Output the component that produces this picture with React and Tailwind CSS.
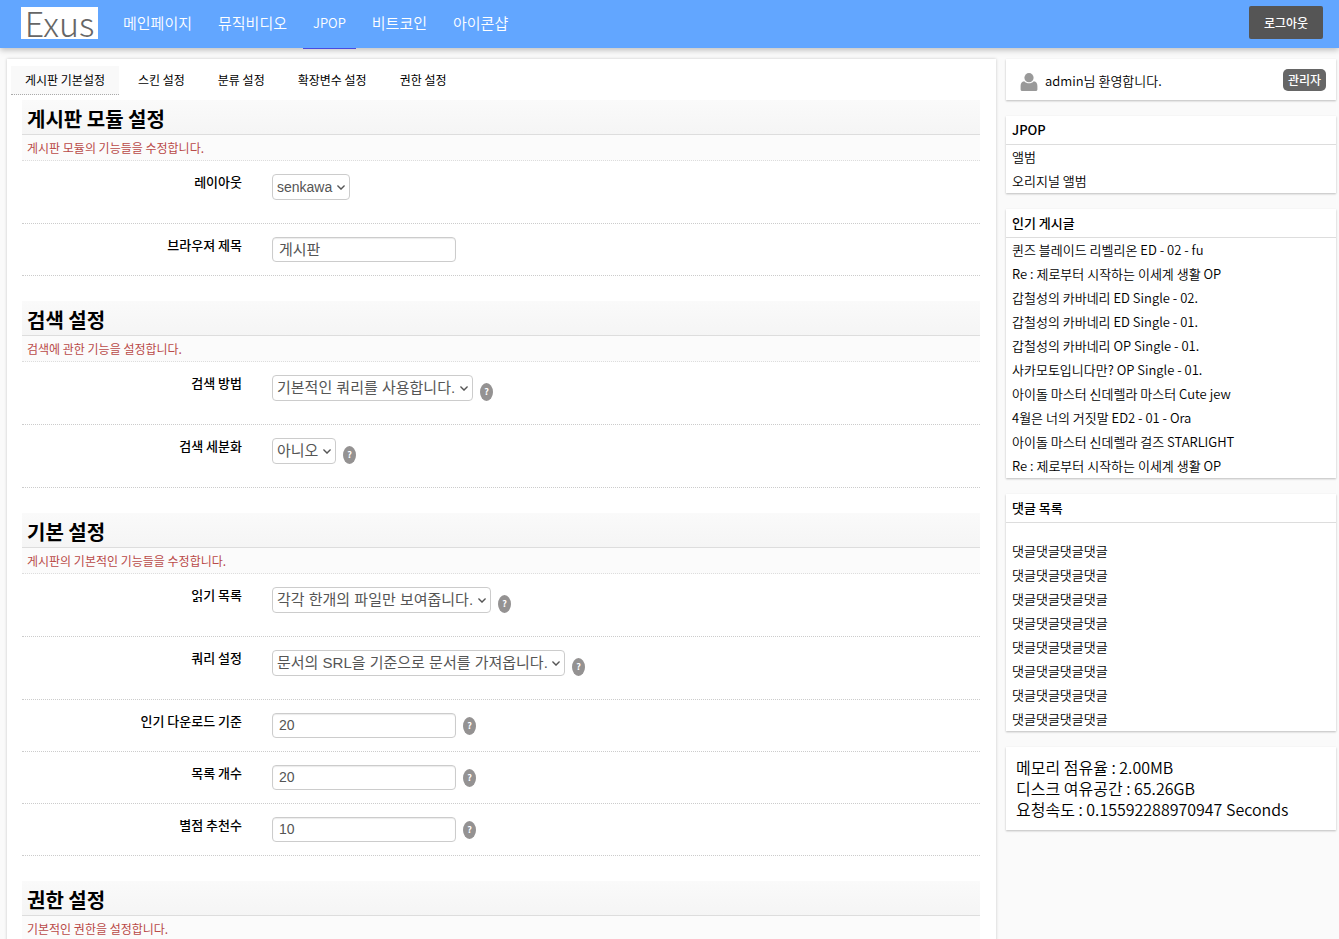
import React, { useState } from "react";
import clsx from "clsx";

const menus = ["메인페이지", "뮤직비디오", "JPOP", "비트코인", "아이콘샵"];

const tabs = [
  "게시판 기본설정",
  "스킨 설정",
  "분류 설정",
  "확장변수 설정",
  "권한 설정",
];

const sections = [
  {
    title: "게시판 모듈 설정",
    desc: "게시판 모듈의 기능들을 수정합니다.",
    fields: [
      { id: "layout", label: "레이아웃", type: "select", value: "senkawa", latin: true },
      { id: "browser_title", label: "브라우져 제목", type: "text", value: "게시판" },
    ],
  },
  {
    title: "검색 설정",
    desc: "검색에 관한 기능을 설정합니다.",
    fields: [
      { id: "search_type", label: "검색 방법", type: "select", value: "기본적인 쿼리를 사용합니다.", help: true },
      { id: "search_detail", label: "검색 세분화", type: "select", value: "아니오", help: true },
    ],
  },
  {
    title: "기본 설정",
    desc: "게시판의 기본적인 기능들을 수정합니다.",
    fields: [
      { id: "read_list", label: "읽기 목록", type: "select", value: "각각 한개의 파일만 보여줍니다.", help: true },
      { id: "query", label: "쿼리 설정", type: "select", value: "문서의 SRL을 기준으로 문서를 가져옵니다.", help: true },
      { id: "download_count", label: "인기 다운로드 기준", type: "text", value: "20", latin: true, help: true },
      { id: "list_count", label: "목록 개수", type: "text", value: "20", latin: true, help: true },
      { id: "star_count", label: "별점 추천수", type: "text", value: "10", latin: true, help: true },
    ],
  },
  {
    title: "권한 설정",
    desc: "기본적인 권한을 설정합니다.",
    fields: [],
  },
];

const albums = ["앨범", "오리지널 앨범"];

const popular = [
  "퀸즈 블레이드 리벨리온 ED - 02 - fu",
  "Re : 제로부터 시작하는 이세계 생활 OP",
  "갑철성의 카바네리 ED Single - 02.",
  "갑철성의 카바네리 ED Single - 01.",
  "갑철성의 카바네리 OP Single - 01.",
  "사카모토입니다만? OP Single - 01.",
  "아이돌 마스터 신데렐라 마스터 Cute jew",
  "4월은 너의 거짓말 ED2 - 01 - Ora",
  "아이돌 마스터 신데렐라 걸즈 STARLIGHT",
  "Re : 제로부터 시작하는 이세계 생활 OP",
];

const comments = Array(8).fill("댓글댓글댓글댓글");

const stats = [
  { label: "메모리 점유율", value: "2.00MB" },
  { label: "디스크 여유공간", value: "65.26GB" },
  { label: "요청속도", value: "0.15592288970947 Seconds" },
];

const Help = () => (
  <button
    type="button"
    aria-label="도움말"
    className="w-[13px] h-[18px] shrink-0 rounded-[50%] bg-[#949292] text-white text-[9px] leading-[18px] font-bold text-center"
  >
    ?
  </button>
);

// -------------------- FORM ROW --------------------
const Field = ({ field }) => {
  const [value, setValue] = useState(field.value);
  const isSelect = field.type === "select";
  const control = clsx(
    "border border-[#ccc] rounded-[4px] bg-white text-[#555] font-['Liberation_Sans','Noto_Sans_CJK_KR',sans-serif]",
    field.latin ? "text-[14px]" : "text-[15px]"
  );

  return (
    <div
      className={clsx(
        "flex gap-[30px] pt-[13px] border-b border-dotted border-[#ccc]",
        isSelect ? "pb-[23px]" : "pb-[13px]"
      )}
    >
      <label
        htmlFor={field.id}
        className="w-[220px] shrink-0 text-right text-[13px] leading-[16px] font-medium"
      >
        {field.label}
      </label>
      <div className={clsx("flex gap-[7px]", isSelect ? "items-end" : "items-center")}>
        {isSelect ? (
          <div className="relative flex">
            <select
              id={field.id}
              value={value}
              onChange={(e) => setValue(e.target.value)}
              className={clsx(control, "h-[26px] pl-1 pr-4 appearance-none")}
            >
              <option>{field.value}</option>
            </select>
            <svg
              viewBox="0 0 8 5"
              className="absolute right-[5px] top-[11px] w-2 h-[5px] pointer-events-none"
              fill="none"
              stroke="#555"
              strokeWidth="1.4"
            >
              <path d="M.4.5 4 4.1 7.6.5" />
            </svg>
          </div>
        ) : (
          <input
            id={field.id}
            type="text"
            value={value}
            onChange={(e) => setValue(e.target.value)}
            className={clsx(control, "w-[184px] h-[25px] px-[6px] pb-[2px] shadow-[inset_0_1px_1px_rgba(0,0,0,0.08)]")}
          />
        )}
        {field.help && <Help />}
      </div>
    </div>
  );
};

const Section = ({ section }) => (
  <section>
    <h2 className="h-[35px] px-[5px] border-b border-[#ddd] bg-linear-to-b from-[#fafafa] to-[#f5f5f5] text-[20px] leading-[38px] font-bold">
      {section.title}
    </h2>
    <p className="h-[26px] px-[5px] border-b border-dotted border-[#ddd] bg-[#fbfbfb] text-[12px] leading-[25px] text-[#b94a48]">
      {section.desc}
    </p>
    {section.fields.map((f) => (
      <Field key={f.id} field={f} />
    ))}
  </section>
);

// -------------------- SIDEBAR --------------------
const Card = ({ children }) => (
  <div className="bg-white shadow-[0_1px_2px_rgba(0,0,0,0.25)]">{children}</div>
);

const ListCard = ({ title, items, spaced }) => (
  <Card>
    <h3 className="h-[29px] px-[6px] border-b border-[#ddd] text-[13px] leading-[28px] font-medium">
      {title}
    </h3>
    <ul className={clsx(spaced && "pt-4")}>
      {items.map((item, i) => (
        <li key={i} className="h-6 px-[6px] text-[13px] leading-6 font-[350] truncate">
          <a href="#">{item}</a>
        </li>
      ))}
    </ul>
  </Card>
);

const App = () => {
  const [tab, setTab] = useState(tabs[0]);

  return (
    <div className="min-h-screen flex flex-col bg-[#fafafa] text-black font-['Noto_Sans_CJK_KR',sans-serif]">
      {/* Header */}
      <header className="relative h-12 flex items-center pl-[21px] pr-4 bg-[#62a6ff] shadow-[0_2px_6px_rgba(0,0,0,0.25)]">
        <a
          href="#"
          className="w-[77px] h-8 mb-[2px] bg-white text-center text-[34px] leading-8 font-light text-[#666]"
        >
          Exus
        </a>
        <nav className="flex flex-1 gap-[6px] ml-[15px] -mb-px self-stretch">
          {menus.map((m) => (
            <a
              key={m}
              href="#"
              className={clsx(
                "px-[10px] leading-[46px] font-[350] text-white border-b",
                m === "JPOP"
                  ? "text-[13px] border-[#4a4ae0]"
                  : "text-[15px] border-transparent"
              )}
            >
              {m}
            </a>
          ))}
        </nav>
        <button
          type="button"
          className="w-[74px] h-[33px] mb-[3px] rounded-[2px] bg-[#555] text-white text-[12px] font-medium"
        >
          로그아웃
        </button>
      </header>

      <div className="flex flex-1 gap-[10px] pt-[11px] pl-[7px] pr-[3px]">
        {/* Settings */}
        <main className="flex-1 bg-white pl-1 pr-4 pt-[7px] pb-6 shadow-[0_0_3px_rgba(0,0,0,0.2)]">
          <div className="flex gap-[5px]">
            {tabs.map((t) => (
              <button
                key={t}
                type="button"
                onClick={() => setTab(t)}
                className={clsx(
                  "h-[29px] px-[14px] text-[12px] border-b border-dotted",
                  t === tab ? "bg-[#f9f9f9] border-[#aaa]" : "border-transparent"
                )}
              >
                {t}
              </button>
            ))}
          </div>
          <form className="flex flex-col gap-[25px] mt-[5px] ml-[11px]">
            {sections.map((s) => (
              <Section key={s.title} section={s} />
            ))}
          </form>
        </main>

        <aside className="w-[330px] shrink-0 flex flex-col gap-4">
          <Card>
            <div className="h-[41px] flex items-center pl-[14px] pr-[10px]">
              <svg viewBox="0 0 18 18" className="w-[18px] h-[18px] mt-1" fill="#999">
                <circle cx="9" cy="4.7" r="4.6" />
                <path d="M4.2 8.2C6.8 11 11.2 11 13.8 8.2 16.3 8.6 17.4 10.4 17.4 13V16.4Q17.4 18 15.8 18H2.2Q.6 18 .6 16.4V13C.6 10.4 1.7 8.6 4.2 8.2Z" />
              </svg>
              <span className="flex-1 ml-[7px] mt-[2px] text-[13px] font-[350]">
                admin님 환영합니다.
              </span>
              <button
                type="button"
                className="w-[43px] h-[22px] rounded-[5px] bg-[#666] text-white text-[12px] leading-[22px] font-medium"
              >
                관리자
              </button>
            </div>
          </Card>
          <ListCard title="JPOP" items={albums} />
          <ListCard title="인기 게시글" items={popular} />
          <ListCard title="댓글 목록" items={comments} spaced />
          <Card>
            <div className="p-[10px]">
              {stats.map((s) => (
                <p key={s.label} className="text-[16px] leading-[21px] font-[350]">
                  {`${s.label} : ${s.value}`}
                </p>
              ))}
            </div>
          </Card>
        </aside>
      </div>
    </div>
  );
};

export default App;
